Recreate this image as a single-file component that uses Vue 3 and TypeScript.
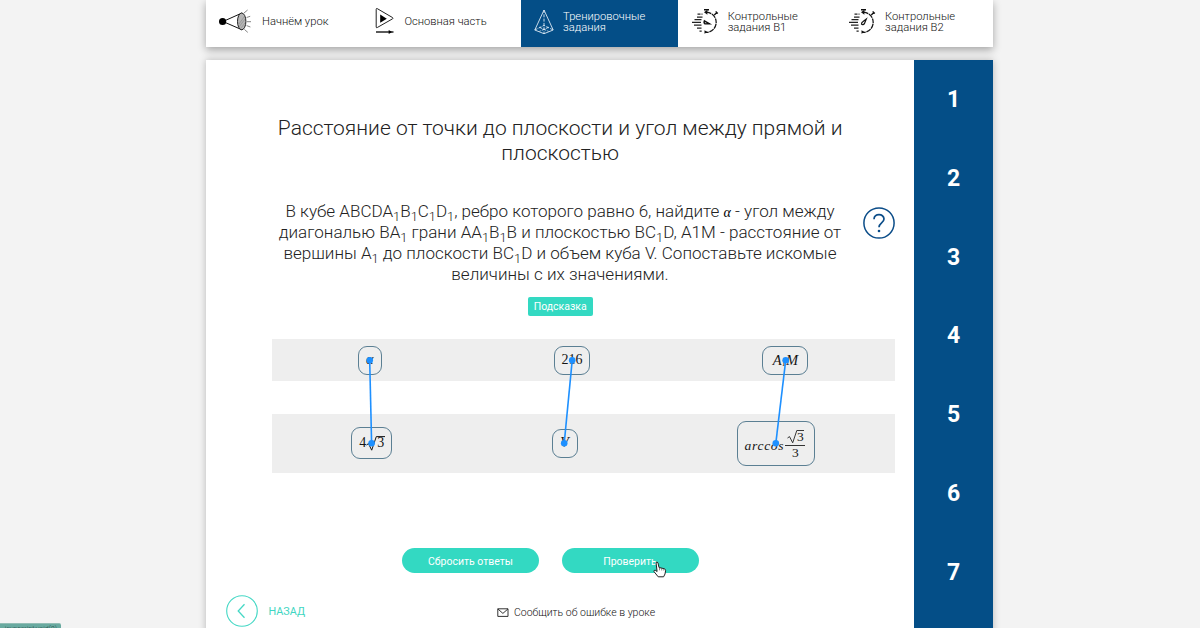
<script setup lang="ts">
interface Link { x1: number; y1: number; x2: number; y2: number }

const steps = ['1', '2', '3', '4', '5', '6', '7']
const links: Link[] = [
  { x1: 369.7, y1: 360.3, x2: 371.6, y2: 443.3 },
  { x1: 572.2, y1: 360.3, x2: 564.2, y2: 443.3 },
  { x1: 785.7, y1: 360.3, x2: 775.8, y2: 443.3 },
]
const rays: string[] = ['M25 7l3.6-3', 'M27.6 11.5l3.6-1.2', 'M27.8 15.7h4.2', 'M27.6 19.6l3.8 1.4', 'M25.4 23.4l3.4 3']
</script>

<template>
  <div class="page">
    <nav class="tabs">
      <div class="tab">
        <svg class="icon lamp" viewBox="0 0 34 32" width="34" height="32">
          <path d="M4 15.5L23 7M4 15.5L23 23.8" stroke="#111" stroke-width="1" fill="none" />
          <circle cx="3.6" cy="15.5" r="3.6" fill="#000" />
          <ellipse cx="22.7" cy="15.4" rx="4.2" ry="8.4" fill="#b5b5b5" stroke="#222" stroke-width="1" />
          <path d="M20 18l5-7M20 21l6-8M22 22l4-5" stroke="#888" stroke-width=".6" />
          <path v-for="r in rays" :key="r" :d="r" stroke="#777" stroke-width=".9" />
        </svg>
        <span class="label l1">Начнём урок</span>
      </div>
      <div class="tab">
        <svg class="icon play" viewBox="0 0 22 28" width="22" height="28">
          <path d="M2.2 1.6Q1.2 1.2 1.2 2.3V20Q1.2 21.2 2.3 20.5L17.6 11.8Q18.5 11.2 17.6 10.6Z" fill="none" stroke="#222" stroke-width="1" />
          <path d="M5.2 7.6v8.2l6.6-4.1z" fill="#000" />
          <path d="M1 25h17.5" stroke="#000" stroke-width="1.3" />
          <path d="M13.7 23l3.3 2-3.3 2z" fill="#000" />
        </svg>
        <span class="label l2">Основная часть</span>
      </div>
      <div class="tab active">
        <svg class="icon pyramid" viewBox="0 0 20 26" width="20" height="26">
          <g fill="none" stroke="#dce9f4" stroke-width=".9" stroke-linejoin="round">
            <path d="M10 1L.8 21 10 24.7l9.2-3.7z" />
            <path d="M10 1v24M.8 21L10 16.4l9.2 4.6M5.5 18.3l9 4M14.5 18.3l-9 4" stroke-dasharray="3 1.3" />
          </g>
        </svg>
        <span class="label l3">Тренировочные<br>задания</span>
      </div>
      <div v-for="n in 2" :key="n" class="tab">
        <svg class="icon timer" viewBox="0 0 28 28" width="28" height="28">
          <path d="M14.5 4.2a10.1 10.1 0 1 1-.8 20.2" fill="none" stroke="#161616" stroke-width="1.3" stroke-dasharray="5 .7" />
          <path d="M12 1.7h5M22.3 7l2.5-2.4M23.6 3.6l2.2 2" stroke="#111" stroke-width="1.4" />
          <path d="M12 4.2l3.4-2.4v5zM12.5 22.2l3 1.9-3 1.6z" fill="#111" />
          <path d="M5.5 6h3M9.5 6h1M5 9h5.5M2.5 11.7h7M0 14.4h9M2 17.2h7.5M5 20h4.5M7.5 23h2.2" stroke="#222" stroke-width="1.25" />
          <path v-if="n === 1" d="M12.4 12.8l5.2 3-4.6.1q-1.5-1-.6-3.1z" fill="none" stroke="#111" stroke-width="1.4" />
          <path v-else d="M17.3 11l-1.8 4.5q-1.7 2-3 .6 0-1.7 1.6-2.6z" fill="none" stroke="#111" stroke-width="1.2" />
        </svg>
        <span class="label l4">Контрольные<br>задания В{{ n }}</span>
      </div>
    </nav>

    <section class="sheet">
      <main class="content">
        <h1><span class="t1">Расстояние от точки до плоскости и угол между прямой и</span><br><span class="t2">плоскостью</span></h1>
        <div class="task">
          <p>
            <span class="row q1">В кубе ABCDA<sub>1</sub>B<sub>1</sub>C<sub>1</sub>D<sub>1</sub>, ребро которого равно 6, найдите <i class="alpha">α</i> - угол между</span>
            <span class="row q2">диагональю BA<sub>1</sub> грани AA<sub>1</sub>B<sub>1</sub>B и плоскостью BC<sub>1</sub>D, A1M - расстояние от</span>
            <span class="row q3">вершины A<sub>1</sub> до плоскости BC<sub>1</sub>D и объем куба V. Сопоставьте искомые</span>
            <span class="row q4">величины с их значениями.</span>
          </p>
          <svg class="help" viewBox="0 0 34 34" width="34" height="34">
            <circle cx="17" cy="17" r="15.1" fill="none" stroke="#0a4c88" stroke-width="1.5" />
            <path d="M12 13.3c0-6.3 10-6.2 10-.2 0 3.8-5 4-5 8.2" fill="none" stroke="#0a4c88" stroke-width="1.7" />
            <circle cx="17" cy="25" r="1.3" fill="#0a4c88" />
          </svg>
        </div>
        <div class="hint-line"><button class="hint">Подсказка</button></div>

        <div class="answers top">
          <div class="chip c1"><i>α</i></div>
          <div class="chip c2">216</div>
          <div class="chip c3"><i>A</i><sub>1</sub><i>M</i></div>
        </div>
        <div class="answers bottom">
          <div class="chip c4">
            <span>4</span>
            <svg viewBox="0 0 19 17" width="19" height="17"><path d="M.5 10l2-1.4 3.2 6.6L10.3 1.6H19" fill="none" stroke="#151515" stroke-width="1" /></svg>
            <span class="radicand">3</span>
          </div>
          <div class="chip c5"><i>V</i></div>
          <div class="chip c6">
            <i class="arccos">arccos</i>
            <span class="fraction">
              <span class="num"><svg viewBox="0 0 18 16" width="18" height="16"><path d="M.5 9l2-1.4 3.2 6.2L9.8 1.5H17" fill="none" stroke="#222" stroke-width=".9" /></svg><b>3</b></span>
              <span class="den">3</span>
            </span>
          </div>
        </div>

        <div class="actions">
          <button class="pill p1">Сбросить ответы</button>
          <button class="pill p2">Проверить</button>
        </div>

        <footer>
          <a class="back">
            <svg viewBox="0 0 34 34" width="34" height="34" fill="none" stroke="#45d8c5">
              <circle cx="17" cy="17" r="15.3" stroke-width="1.1" />
              <path d="M19.5 10.2l-6.3 6.8 6.3 6.8" stroke-width="1.3" />
            </svg>
            <span>НАЗАД</span>
          </a>
          <a class="report">
            <svg viewBox="0 0 12 10" width="12" height="10" fill="none" stroke="#333" stroke-width="1">
              <path d="M.8.8h10.2v7.6H.8zM.8.9l5.1 4.5L11 .9" />
            </svg>
            <span>Сообщить об ошибке в уроке</span>
          </a>
        </footer>
      </main>
      <aside>
        <span v-for="s in steps" :key="s">{{ s }}</span>
      </aside>
    </section>

    <svg class="links" viewBox="0 0 1200 628" width="1200" height="628">
      <g v-for="l in links" :key="l.x1" fill="#1e90ff" stroke="#1e90ff">
        <line :x1="l.x1" :y1="l.y1" :x2="l.x2" :y2="l.y2" stroke-width="1.6" />
        <circle :cx="l.x1" :cy="l.y1" r="3.3" stroke="none" />
        <circle :cx="l.x2" :cy="l.y2" r="3.3" stroke="none" />
      </g>
    </svg>
    <svg class="cursor" viewBox="0 0 14 17" width="14" height="17">
      <path d="M3 1.5q1.4-1.2 2 .5l1 4.5 5.2 1.2q1.5.5 1.4 2L12 13l-1.4 2.8H5.2L1 10.6q-.3-1.6 1.2-1.4l1.9 1.3z" fill="#fff" stroke="#222" stroke-width="1" />
      <path d="M6.5 6.5v2.8M8.7 7v2.5M10.8 7.6v2" stroke="#555" stroke-width=".7" />
    </svg>
    <div class="status">javascript:void(0)</div>
  </div>
</template>

<style>
body { margin: 0; overflow: hidden; background: #f3f3f3; }
</style>

<style scoped>
.page { position: relative; width: 1200px; height: 628px; overflow: hidden; background: #f3f3f3; font-family: Roboto, sans-serif; font-weight: 300; color: #222; }
.page * { box-sizing: border-box; }
.page span, .page button { white-space: nowrap; }
.tabs { display: flex; width: 787px; height: 47px; margin-left: 206px; background: #fff; box-shadow: 0 3px 8px rgba(0, 0, 0, .32); }
.tab { display: flex; width: 157.4px; height: 47px; padding-left: 13px; }
.active { background: #044e87; color: #fff; }
.icon { flex: none; }
.lamp { margin-top: 6px; }
.play { margin: 7px 0 0 -1px; }
.pyramid { margin-top: 8.5px; }
.timer { margin: 8px 0 0 .5px; }
.label { font-size: 11.2px; line-height: 11.2px; margin-top: 10.5px; font-weight: 300; color: #111; }
.active .label { color: #fff; }
.l1 { margin: 16px 0 0 9px; }
.l2 { margin: 16px 0 0 7px; }
.l3 { margin-left: 9.3px; }
.l4 { margin-left: 8px; }
.sheet { display: flex; width: 787px; height: 590px; margin: 13px 0 0 206px; background: #fff; box-shadow: 0 0 7px rgba(0, 0, 0, .25); }
.content { width: 708.4px; }
h1 { margin: 56px 0 0; height: 50px; font-size: 21px; line-height: 25px; font-weight: 300; text-align: center; }
.task { display: flex; margin-top: 35px; height: 84px; }
p { width: 562px; margin: 0 0 0 73px; font-size: 17.05px; line-height: 21px; }
.row { display: block; margin: 0 -10px; height: 21px; text-align: center; }
sub { font-size: 75%; line-height: 0; vertical-align: baseline; position: relative; top: 4px; }
.alpha { font: italic 400 14px/1 "Liberation Serif", serif; color: #000; }
.help { margin: 5px 0 0 20.5px; }
.hint-line { height: 19px; margin-top: 12px; text-align: center; line-height: 0; }
button { padding: 0; border: 0; background: #33d9c2; color: #fff; font-family: Roboto, sans-serif; font-weight: 400; }
.hint { width: 65px; height: 19px; border-radius: 2px; font-size: 10.5px; }
.answers { display: flex; justify-content: space-around; align-items: center; width: 623px; margin-left: 65.6px; background: #eee; font-family: "Liberation Serif", serif; font-weight: 400; color: #151515; }
.top { height: 42px; margin-top: 23px; }
.bottom { height: 58.5px; margin-top: 33px; }
.chip { display: flex; align-items: center; justify-content: center; border: 1px solid #5b7f93; border-radius: 9px; font-size: 14px; line-height: 16px; height: 29px; }
.c1 { width: 24px; } .c2 { width: 36px; } .c3 { width: 46px; }
.c3 { font-size: 14.5px; }
.c3 sub { font-size: 9px; top: 3px; }
.c4 { width: 41px; height: 32px; } .c4 svg { margin-right: -8px; }
.c5 { width: 26px; } .c6 { width: 78px; height: 45px; }
.arccos { font-size: 13.5px; letter-spacing: .7px; margin-top: 6px; }
.fraction { display: flex; flex-direction: column; align-items: center; width: 20px; margin-left: 1px; margin-right: 2px; font-size: 13.5px; line-height: 14px; margin-top: 2px; }
.num { display: flex; height: 17px; width: 20px; border-bottom: 1px solid #333; justify-content: center; }
.num b { font-weight: 400; margin-left: -8px; line-height: 16px; }
.actions { display: flex; gap: 22.5px; margin: 75.7px 0 0 196px; }
.pill { width: 137px; height: 25px; border-radius: 13px; font-size: 10.5px; padding-top: 1px; }
footer { display: flex; margin: 20.6px 0 0 18.5px; height: 34px; }
.back, .report { display: flex; align-items: center; }
.back { width: 272.5px; gap: 10px; color: #3fd6c2; font-size: 10.8px; font-weight: 400; }
.back span { margin-top: 2px; }
.report { gap: 5px; padding-top: 4px; font-size: 10.5px; font-weight: 300; color: #111; }
aside { display: flex; flex-direction: column; width: 78.6px; background: #044e87; color: #fff; font-size: 23px; font-weight: 700; }
aside span { height: 78.75px; line-height: 79px; text-align: center; }
.links { position: absolute; left: 0; top: 0; }
.cursor { position: absolute; left: 653px; top: 561px; }
.status { position: absolute; left: 0; top: 622.5px; width: 61px; height: 18px; border-top: 1px solid #92bdb5; border-radius: 0 2px 0 0; background: #69aaa0; color: #244c48; font-size: 7px; line-height: 10px; text-align: right; padding-right: 4px; white-space: nowrap; }
</style>
